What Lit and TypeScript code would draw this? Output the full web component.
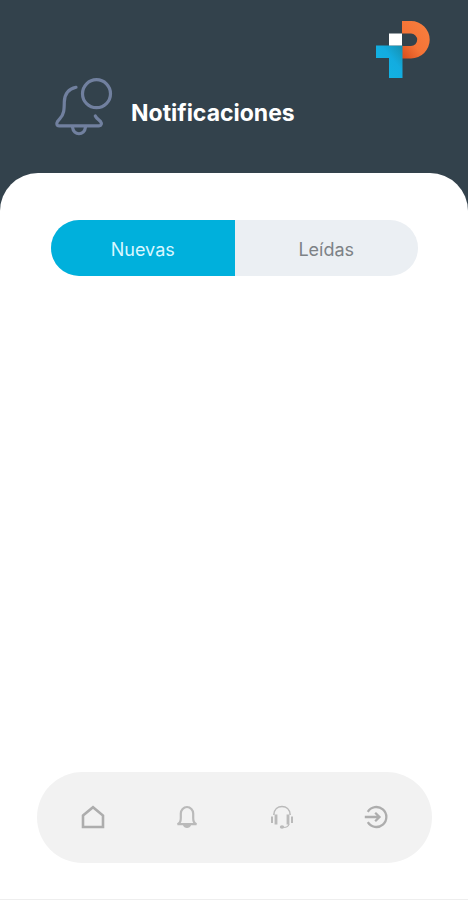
import { LitElement, html, css, svg } from "lit";
import { customElement, state } from "lit/decorators.js";
import { classMap } from "lit/directives/class-map.js";

const homeIcon = svg`<path d="M2 10.500 12 2.200l10 8.300V22H2Z" stroke-width="2.600"/>`;
const bellIcon = svg`
  <path d="M2.500 19.200c2.400-1 3.300-3 3.300-6V8.500a6.200 6.500 0 0 1 12.400 0v4.700c0 3 .9 5 3.300 6Z" stroke-width="2.200"/>
  <path d="M8 20h8c-.6 4-7.400 4-8 0Z" fill="currentColor" stroke="none"/>`;
const supportIcon = svg`
  <path d="M3.800 10C4 4 8 1.500 12 1.500S20 4 20.200 10" stroke-width="1.600"/>
  <path d="M6 9.500v10M18 9.500v10" stroke-width="2.800"/>
  <path d="M2 11.500v6.500M22 11.500v6.500" stroke-width="2"/>
  <path d="M19 19c-.5 2.500-2.500 3.500-5.500 3.500" stroke-width="1.200"/>
  <ellipse cx="12" cy="22" rx="2.200" ry="1.700" fill="currentColor" stroke="none"/>`;
const exitIcon = svg`
  <path d="M3.800 6.800A10 10 0 1 1 3.800 17.200" stroke-width="2.300"/>
  <path d="M.8 12H15.500M11.200 7.800l4.300 4.200-4.300 4.200" stroke-width="2.300"/>`;

const navItems = [
  { label: "Inicio", icon: homeIcon },
  { label: "Notificaciones", icon: bellIcon, soft: true },
  { label: "Soporte", icon: supportIcon, soft: true },
  { label: "Salir", icon: exitIcon },
];

@customElement("app-root")
export class AppRoot extends LitElement {
  @state() private tab = "Nuevas";

  static styles = css`
    :host {
      display: flex;
      flex-direction: column;
      box-sizing: border-box;
      min-height: 100vh;
      background: #33424c;
      font-family: Inter, "Open Sans", sans-serif;
    }
    header {
      display: flex;
      flex-direction: column;
      padding: 20px 37px 35px 53px;
    }
    .logo {
      align-self: flex-end;
      width: 56px;
      height: 58px;
    }
    .heading {
      display: flex;
      align-items: center;
      gap: 16px;
      margin-top: -2px;
    }
    .heading svg {
      width: 62px;
      height: 62px;
      color: #71809f;
    }
    h1 {
      margin: 0;
      padding-top: 12px;
      color: #fff;
      font-size: 23px;
      line-height: 28px;
      font-weight: 700;
    }
    main {
      flex: 1;
      display: flex;
      flex-direction: column;
      justify-content: space-between;
      padding: 47px 36px 36px 37px;
      border-bottom: 1px solid #eee;
      border-radius: 38px 38px 0 0;
      background: #fff;
    }
    .tabs {
      display: grid;
      grid-template-columns: 1fr 1fr;
      height: 56px;
      margin: 0 14px;
      overflow: hidden;
      border-radius: 28px;
      background: #ebeff3;
    }
    .tab {
      padding: 2px 0 0;
      border: 0;
      background: none;
      color: #7d8286;
      font: inherit;
      font-size: 18px;
      cursor: pointer;
    }
    .tab.active {
      background: #00b0dc;
      color: #d8f7ff;
    }
    nav {
      display: grid;
      grid-template-columns: repeat(4, 1fr);
      height: 89px;
      padding: 0 9px 2px;
      border-radius: 46px;
      background: #f2f2f2;
    }
    .item {
      display: flex;
      align-items: center;
      justify-content: center;
      color: #adadad;
    }
    .item.soft {
      color: #bababa;
    }
    .item svg {
      width: 24px;
      height: 24px;
    }
  `;

  render() {
    return html`
      <header>
        <svg class="logo" viewBox="0 0 56 58" aria-hidden="true">
          <defs>
            <linearGradient id="warm" x1="1" y1="0" x2="0" y2="1">
              <stop offset="0" stop-color="#f9803f" />
              <stop offset="0.600" stop-color="#f57336" />
              <stop offset="1" stop-color="#d94c1c" />
            </linearGradient>
            <linearGradient id="cool" x1="0" y1="1" x2="1" y2="0">
              <stop offset="0" stop-color="#12b6e4" />
              <stop offset="0.600" stop-color="#13ace0" />
              <stop offset="1" stop-color="#168fae" />
            </linearGradient>
          </defs>
          <path fill="url(#warm)" d="M27 1H36A18.700 18.700 0 0 1 36 38.400H27V26H36a6.200 6.200 0 0 0 0-12.400H27Z" />
          <path fill="url(#cool)" d="M1 25.500H27.500V58H14V38H1Z" />
          <path fill="#fff" d="M14 13.500H27V25.500H14Z" />
        </svg>
        <div class="heading">
          <svg viewBox="0 0 62 62" fill="none" stroke="currentColor" stroke-width="3.200" stroke-linecap="round" stroke-linejoin="round" aria-hidden="true">
            <circle cx="43.500" cy="17.700" r="14" />
            <path d="M23 11.300C15 13 11.500 19 11.300 26C11.200 34 11 38 7 42.500L4.500 45.500C3 48 4 49.800 6 49.800H46C48.500 49.800 49 47.500 47.500 45.500C45.500 43.500 43.500 42.500 42.300 40" />
            <path d="M19.500 51C20.500 60 31.500 60 32.500 51" />
          </svg>
          <h1>Notificaciones</h1>
        </div>
      </header>
      <main>
        <div class="tabs" role="tablist">
          ${["Nuevas", "Leídas"].map(
            (name) => html`<button
              class=${classMap({ tab: true, active: this.tab === name })}
              role="tab"
              aria-selected=${this.tab === name}
              @click=${() => (this.tab = name)}
            >${name}</button>`
          )}
        </div>
        <nav>
          ${navItems.map(
            (item) => html`<a class=${classMap({ item: true, soft: !!item.soft })} href="#" aria-label=${item.label}>
              <svg viewBox="0 0 24 24" fill="none" stroke="currentColor" aria-hidden="true">${item.icon}</svg>
            </a>`
          )}
        </nav>
      </main>
    `;
  }
}
